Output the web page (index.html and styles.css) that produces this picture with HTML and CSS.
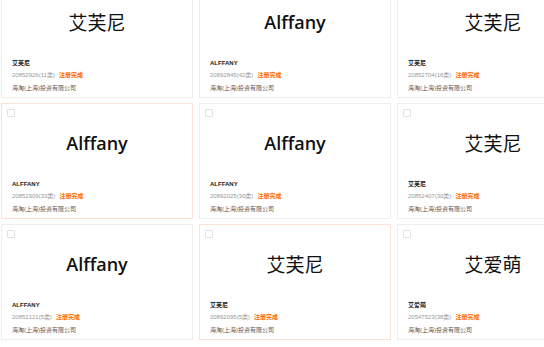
FILE: index.html
```html
<!DOCTYPE html>
<html>
  <head>
    <meta charset="utf-8" />
    <title>商标列表</title>
    <link rel="stylesheet" href="styles.css">
  </head>
  <body>
    <div class="mark-list">
      <div class="mark-card">
        <span class="check"></span>
        <div class="mark-title">艾芙尼</div>
        <div class="mark-info">
          <div class="mark-name">艾芙尼</div>
          <div class="mark-reg">20852926(11类)<span class="status">注册完成</span></div>
          <div class="mark-owner">海淘(上海)投资有限公司</div>
        </div>
      </div>
      <div class="mark-card">
        <span class="check"></span>
        <div class="mark-title latin">Alffany</div>
        <div class="mark-info">
          <div class="mark-name">ALFFANY</div>
          <div class="mark-reg">20892845(42类)<span class="status">注册完成</span></div>
          <div class="mark-owner">海淘(上海)投资有限公司</div>
        </div>
      </div>
      <div class="mark-card">
        <span class="check"></span>
        <div class="mark-title">艾芙尼</div>
        <div class="mark-info">
          <div class="mark-name">艾芙尼</div>
          <div class="mark-reg">20852704(16类)<span class="status">注册完成</span></div>
          <div class="mark-owner">海淘(上海)投资有限公司</div>
        </div>
      </div>

      <div class="mark-card active">
        <span class="check"></span>
        <div class="mark-title latin">Alffany</div>
        <div class="mark-info">
          <div class="mark-name">ALFFANY</div>
          <div class="mark-reg">20852909(33类)<span class="status">注册完成</span></div>
          <div class="mark-owner">海淘(上海)投资有限公司</div>
        </div>
      </div>
      <div class="mark-card">
        <span class="check"></span>
        <div class="mark-title latin">Alffany</div>
        <div class="mark-info">
          <div class="mark-name">ALFFANY</div>
          <div class="mark-reg">20892025(30类)<span class="status">注册完成</span></div>
          <div class="mark-owner">海淘(上海)投资有限公司</div>
        </div>
      </div>
      <div class="mark-card">
        <span class="check"></span>
        <div class="mark-title">艾芙尼</div>
        <div class="mark-info">
          <div class="mark-name">艾芙尼</div>
          <div class="mark-reg">20852407(30类)<span class="status">注册完成</span></div>
          <div class="mark-owner">海淘(上海)投资有限公司</div>
        </div>
      </div>

      <div class="mark-card">
        <span class="check"></span>
        <div class="mark-title latin">Alffany</div>
        <div class="mark-info">
          <div class="mark-name">ALFFANY</div>
          <div class="mark-reg">20852121(5类)<span class="status">注册完成</span></div>
          <div class="mark-owner">海淘(上海)投资有限公司</div>
        </div>
      </div>
      <div class="mark-card active">
        <span class="check"></span>
        <div class="mark-title">艾芙尼</div>
        <div class="mark-info">
          <div class="mark-name">艾芙尼</div>
          <div class="mark-reg">20892095(5类)<span class="status">注册完成</span></div>
          <div class="mark-owner">海淘(上海)投资有限公司</div>
        </div>
      </div>
      <div class="mark-card">
        <span class="check"></span>
        <div class="mark-title">艾爱萌</div>
        <div class="mark-info">
          <div class="mark-name">艾爱萌</div>
          <div class="mark-reg">20547523(38类)<span class="status">注册完成</span></div>
          <div class="mark-owner">海淘(上海)投资有限公司</div>
        </div>
      </div>
    </div>
  </body>
</html>
```

FILE: styles.css
```css
html {
  background-color: #fff;
  overflow: hidden;
}

body {
  margin: 0;
  font-family: "Liberation Sans", "Noto Sans CJK SC", sans-serif;
}

.mark-list {
  display: grid;
  grid-template-columns: repeat(3, 192px);
  grid-auto-rows: 116px;
  column-gap: 6px;
  row-gap: 5px;
  margin-top: -18px;
  padding-left: 1px;
}

.mark-card {
  position: relative;
  display: flex;
  flex-direction: column;
  box-sizing: border-box;
  border: 1px solid #eeeeee;
  padding: 0 10px 3px;
  background: #fff;
}
.mark-card.active {
  border-color: #fbe2d2;
}

.check {
  position: absolute;
  top: 5px;
  left: 5px;
  width: 6px;
  height: 6px;
  border: 1px solid #e2e2e2;
  border-radius: 1px;
}

.mark-title {
  margin-top: 26px;
  line-height: 26px;
  text-align: center;
  font-size: 19px;
  color: #111;
  font-family: "Noto Sans CJK SC", sans-serif;
}
.mark-title.latin {
  font-family: "Open Sans", "Noto Sans CJK SC", sans-serif;
  font-weight: 600;
  font-size: 18px;
}

.mark-info {
  margin-top: auto;
  font-size: 6px;
}

.mark-name {
  line-height: 12px;
  font-weight: bold;
  color: #222;
}

.mark-reg {
  line-height: 13px;
  color: #999;
}
.mark-reg .status {
  margin-left: 4px;
  color: #ff6a00;
  font-weight: bold;
}

.mark-owner {
  line-height: 12px;
  color: #555;
}
```
